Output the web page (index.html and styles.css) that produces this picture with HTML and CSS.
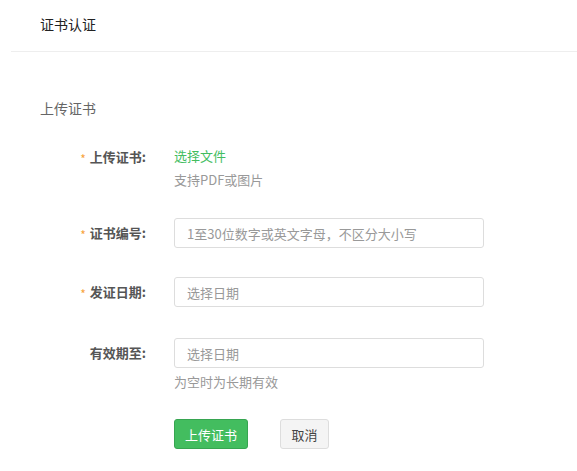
FILE: index.html
```html
<!DOCTYPE html>
<html>
<head>
  <meta charset="UTF-8">
  <title>证书认证</title>
  <link rel="stylesheet" href="styles.css">
</head>
<body>
  <div class="page">
    <div class="header">
      <h1>证书认证</h1>
    </div>

    <div class="content">
      <h2 class="section-title">上传证书</h2>

      <form class="cert-form">
        <div class="form-row row-file">
          <label class="form-label required">上传证书:</label>
          <div class="form-field">
            <a class="file-link" href="#">选择文件</a>
            <p class="field-tip tip-file">支持PDF或图片</p>
          </div>
        </div>

        <div class="form-row row-number">
          <label class="form-label required">证书编号:</label>
          <div class="form-field">
            <input type="text" class="text-input" placeholder="1至30位数字或英文字母，不区分大小写">
          </div>
        </div>

        <div class="form-row row-issue">
          <label class="form-label required">发证日期:</label>
          <div class="form-field">
            <input type="text" class="text-input" placeholder="选择日期">
          </div>
        </div>

        <div class="form-row row-expire">
          <label class="form-label">有效期至:</label>
          <div class="form-field">
            <input type="text" class="text-input" placeholder="选择日期">
            <p class="field-tip">为空时为长期有效</p>
          </div>
        </div>

        <div class="form-row row-actions">
          <div class="form-label"></div>
          <div class="button-group">
            <button type="button" class="submit-btn">上传证书</button>
            <button type="button" class="cancel-btn">取消</button>
          </div>
        </div>
      </form>
    </div>
  </div>
</body>
</html>
```

FILE: styles.css
```css
:root {
  --text-primary: #333333;
  --text-label: #555555;
  --text-secondary: #999999;
  --border-color: #dddddd;
  --divider: #eeeeee;
  --green: #43bd5f;
  --green-border: #37a551;
  --required: #f7a33b;
}

* {
  box-sizing: border-box;
  margin: 0;
  padding: 0;
}

body {
  font-family: "Noto Sans CJK SC", "Noto Sans", sans-serif;
  font-size: 13px;
  line-height: 18px;
  color: var(--text-primary);
  background: #ffffff;
}

.header {
  margin-left: 11px;
  height: 52px;
  padding: 15px 0 0 29px;
  border-bottom: 1px solid var(--divider);
}

.header h1 {
  font-size: 14px;
  font-weight: 400;
  line-height: 18px;
  color: #222222;
}

.content {
  padding: 47px 0 0 40px;
}

.section-title {
  font-size: 14px;
  font-weight: 400;
  line-height: 18px;
  color: #666666;
}

.cert-form {
  display: flex;
  flex-direction: column;
}

.form-row {
  display: flex;
  align-items: flex-start;
}

.row-file {
  margin-top: 30px;
}

.row-number {
  margin-top: 29px;
}

.row-issue {
  margin-top: 29px;
}

.row-expire {
  margin-top: 31px;
}

.row-actions {
  margin-top: 28px;
}

.form-label {
  width: 106px;
  flex-shrink: 0;
  margin-right: 28px;
  text-align: right;
  font-weight: 700;
  color: var(--text-label);
}

.row-file .form-label {
  margin-top: 1px;
}

.row-number .form-label,
.row-issue .form-label,
.row-expire .form-label {
  line-height: 30px;
}

.form-label.required::before {
  content: '*';
  color: var(--required);
  font-weight: 400;
  font-size: 12px;
  margin-right: 4px;
  position: relative;
  top: 2px;
}

.form-field {
  display: flex;
  flex-direction: column;
}

.file-link {
  color: var(--green);
  text-decoration: none;
}

.field-tip {
  margin-top: 5px;
  color: var(--text-secondary);
}

.tip-file {
  margin-top: 6px;
}

.text-input {
  width: 310px;
  height: 30px;
  padding: 0 12px;
  border: 1px solid var(--border-color);
  border-radius: 3px;
  font-family: inherit;
  font-size: 13px;
  color: var(--text-primary);
  background: #ffffff;
}

.text-input::placeholder {
  color: #999999;
}

.text-input:focus {
  outline: none;
  border-color: var(--green);
}

.button-group {
  display: flex;
  gap: 32px;
}

button {
  height: 30px;
  border-radius: 3px;
  font-family: inherit;
  font-size: 13px;
  cursor: pointer;
}

.submit-btn {
  width: 74px;
  background-color: var(--green);
  border: 1px solid var(--green-border);
  color: #ffffff;
}

.cancel-btn {
  width: 49px;
  background-color: #f4f4f4;
  border: 1px solid var(--border-color);
  color: #444444;
}
```
